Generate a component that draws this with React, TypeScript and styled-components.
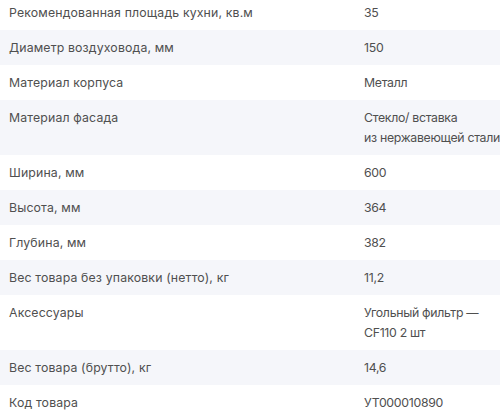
import styled, { createGlobalStyle } from 'styled-components'

const GlobalStyle = createGlobalStyle`
    body {
        margin: 0;
        background: #ffffff;
        font-family: Inter, 'Noto Sans', sans-serif;
    }
`

const Table = styled.div`
    margin-top: -5px;
    width: 500px;
`

const Row = styled.div`
    display: grid;
    grid-template-columns: 364px 1fr;
    padding: 7.5px 0;
    font-size: 12.3px;
    line-height: 20px;
    color: #4f4f4f;

    &:nth-child(even) {
        background: #f5f6fa;
    }
`

const Label = styled.div`
    padding-left: 9px;
    letter-spacing: 0.15px;
`

const Value = styled.div`
    white-space: nowrap;
    letter-spacing: -0.3px;
`

const specs: { label: string; value: React.ReactNode }[] = [
    { label: 'Рекомендованная площадь кухни, кв.м', value: '35' },
    { label: 'Диаметр воздуховода, мм', value: '150' },
    { label: 'Материал корпуса', value: 'Металл' },
    {
        label: 'Материал фасада',
        value: (
            <>
                Стекло/ вставка
                <br />
                из нержавеющей стали
            </>
        ),
    },
    { label: 'Ширина, мм', value: '600' },
    { label: 'Высота, мм', value: '364' },
    { label: 'Глубина, мм', value: '382' },
    { label: 'Вес товара без упаковки (нетто), кг', value: '11,2' },
    {
        label: 'Аксессуары',
        value: (
            <>
                Угольный фильтр —
                <br />
                CF110 2 шт
            </>
        ),
    },
    { label: 'Вес товара (брутто), кг', value: '14,6' },
    { label: 'Код товара', value: 'УТ000010890' },
]

function App() {
    return (
        <>
            <GlobalStyle />
            <Table>
                {specs.map(spec => (
                    <Row key={spec.label}>
                        <Label>{spec.label}</Label>
                        <Value>{spec.value}</Value>
                    </Row>
                ))}
            </Table>
        </>
    )
}

export default App
